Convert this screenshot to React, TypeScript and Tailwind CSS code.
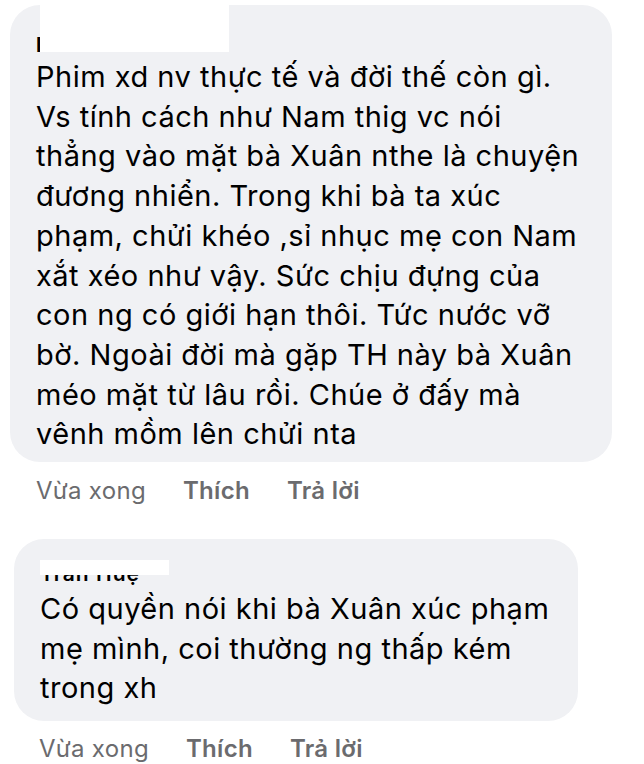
export default function App() {
  const font = { fontFamily: 'Inter, "Liberation Sans", Arial, sans-serif' };
  return (
    <div className="w-[644px] h-[764px] bg-white overflow-hidden relative" style={font}>
      <div className="ml-[10px] mt-[5px] w-[602px] rounded-[30px] bg-[#f0f1f4] pl-[26px] pr-2 pt-[28px] pb-[8px] relative">
        <div className="text-[20px] leading-[24px] font-bold text-black h-[24px]">I</div>
        <div className="absolute left-[30px] top-0 w-[189px] h-[47px] bg-white" />
        <p className="text-[29px] leading-[39.7px] tracking-[0.5px] text-black whitespace-nowrap">
          Phim xd nv thực tế và đời thế còn gì.<br />
          Vs tính cách như Nam thig vc nói<br />
          thẳng vào mặt bà Xuân nthe là chuyện<br />
          đương nhiển. Trong khi bà ta xúc<br />
          phạm, chửi khéo ,sỉ nhục mẹ con Nam<br />
          xắt xéo như vậy. Sức chịu đựng của<br />
          con ng có giới hạn thôi. Tức nước vỡ<br />
          bờ. Ngoài đời mà gặp TH này bà Xuân<br />
          méo mặt từ lâu rồi. Chúe ở đấy mà<br />
          vênh mồm lên chửi nta
        </p>
      </div>
      <div className="ml-[36px] mt-[14px] flex gap-[37px] text-[24px] leading-[30px] tracking-[0.3px] text-[#6b6b6e]">
        <span>Vừa xong</span>
        <span className="font-semibold">Thích</span>
        <span className="font-semibold">Trả lời</span>
      </div>
      <div className="ml-[14px] mt-[33px] w-[564px] rounded-[30px] bg-[#f0f1f4] pl-[26px] pr-2 pt-[20px] pb-[13px] relative">
        <div className="text-[21px] leading-[30px] font-semibold text-black h-[30px] tracking-[1px]">Trần Huệ</div>
        <div className="absolute left-[26px] top-[21px] w-[129px] h-[15px] bg-white" />
        <p className="text-[29px] leading-[39.7px] tracking-[0.5px] text-black whitespace-nowrap">
          Có quyền nói khi bà Xuân xúc phạm<br />
          mẹ mình, coi thường ng thấp kém<br />
          trong xh
        </p>
      </div>
      <div className="ml-[39px] mt-[13px] flex gap-[37px] text-[24px] leading-[30px] tracking-[0.3px] text-[#6b6b6e]">
        <span>Vừa xong</span>
        <span className="font-semibold">Thích</span>
        <span className="font-semibold">Trả lời</span>
      </div>
    </div>
  );
}
